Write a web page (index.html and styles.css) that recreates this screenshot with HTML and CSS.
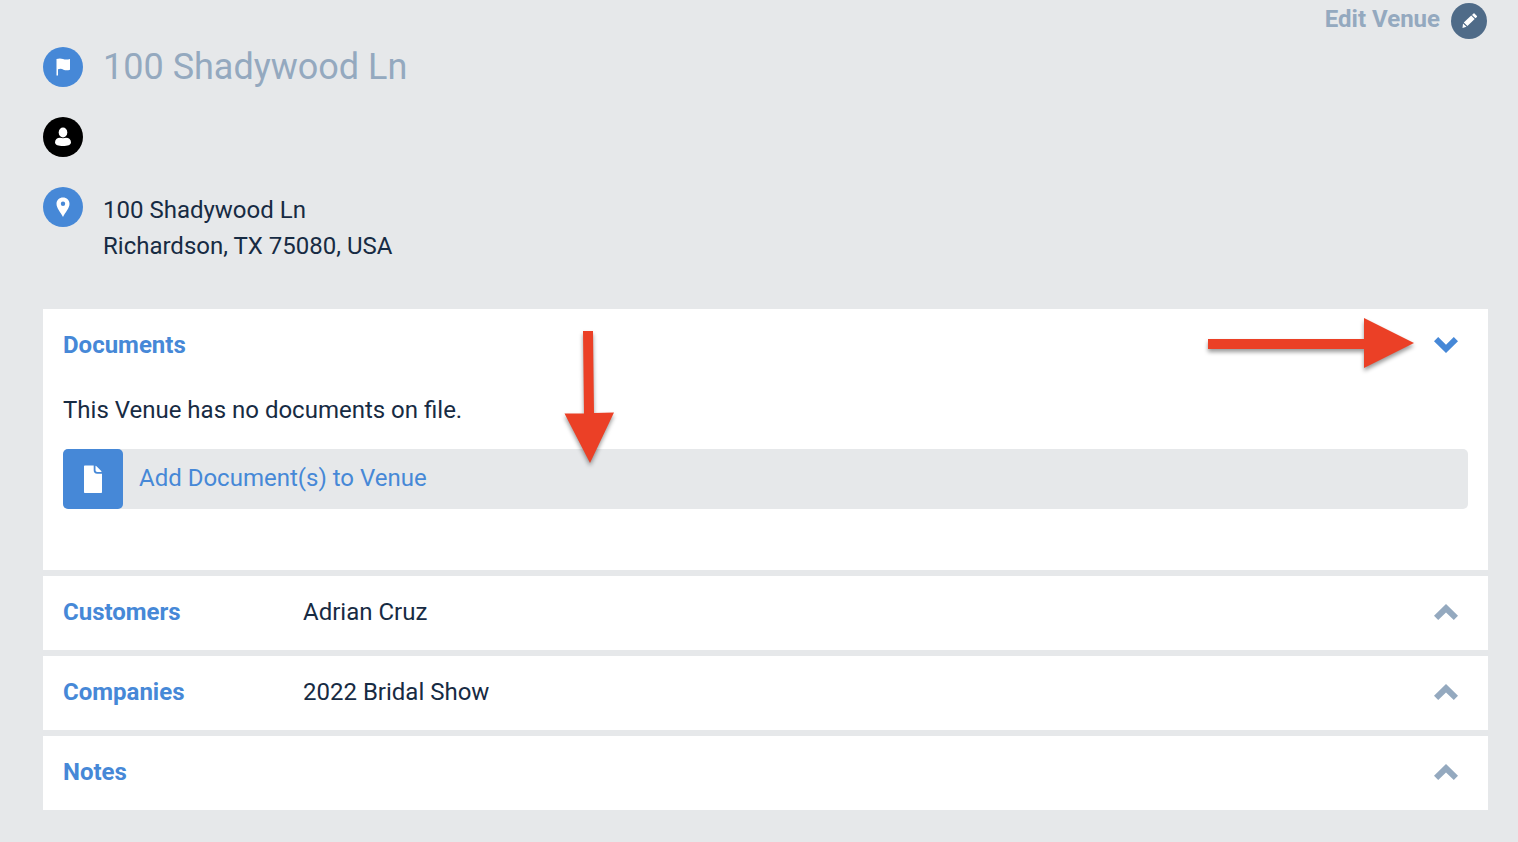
FILE: index.html
```html
<!DOCTYPE html>
<html lang="en">
<head>
<meta charset="utf-8">
<meta name="viewport" content="width=device-width, initial-scale=1">
<title>100 Shadywood Ln</title>
<link rel="stylesheet" href="styles.css">
</head>
<body>
<main class="venue">
  <header class="toolbar">
    <a class="edit" href="#edit">
      <span class="edit-label">Edit Venue</span>
      <span class="edit-icon"><svg width="36" height="36" viewBox="0 0 36 36" aria-hidden="true"><path fill="#fff" d="M12 20.500l3.500 3.200-4 1.300zM12.800 19.500L20.200 12.600l3.500 3.500-7.300 7zM21 11.900l1.500-1.400q.5-.4 1 0l2.400 2.400q.4.500 0 1l-1.400 1.400z"/></svg></span>
    </a>
  </header>

  <section class="details">
    <div class="detail">
      <span class="badge"><svg width="40" height="40" viewBox="0 0 40 40" aria-hidden="true"><path fill="#fff" d="M13.500 12q3.500-1.200 6.500 0 3 1.100 7 0v10.700q-3.500 1.100-6.500 0-2.500-1.500-5.500-.4V28.500h-1.500z"/></svg></span>
      <h1 class="title">100 Shadywood Ln</h1>
    </div>
    <div class="detail">
      <span class="badge badge-dark"><svg width="40" height="40" viewBox="0 0 40 40" aria-hidden="true"><g fill="#fff"><ellipse cx="20" cy="15.500" rx="4.300" ry="4.900"/><path d="M12 25.500c0-3 2-4.600 5-4.700q3 .9 6 0c3 .1 5 1.700 5 4.700 0 2.400-3.500 3.500-8 3.500s-8-1.100-8-3.500z"/></g></svg></span>
    </div>
    <div class="detail">
      <span class="badge"><svg width="40" height="40" viewBox="0 0 40 40" aria-hidden="true"><path fill="#fff" fill-rule="evenodd" d="M20 10.500c3.700 0 6.500 2.700 6.500 6.300 0 4.500-4.200 8.500-6.500 13.200-2.300-4.700-6.500-8.700-6.500-13.200 0-3.600 2.800-6.300 6.500-6.300zm0 4a2.200 2.200 0 1 0 0 4.400 2.200 2.200 0 0 0 0-4.400z"/></svg></span>
      <address class="address">100 Shadywood Ln<br>Richardson, TX 75080, USA</address>
    </div>
  </section>

  <section class="panels">
    <article class="panel panel-open">
      <div class="panel-head">
        <h2 class="panel-title">Documents</h2>
        <button class="toggle toggle-open" type="button" aria-label="Collapse Documents" aria-expanded="true"><svg width="24" height="16" viewBox="0 0 24 16" aria-hidden="true"><path fill="currentColor" d="M0 4.200L4.200 0 12 7.800 19.800 0 24 4.200 12 16z"/></svg></button>
      </div>
      <p class="empty">This Venue has no documents on file.</p>
      <button class="add" type="button">
        <span class="add-icon"><svg width="18" height="28" viewBox="0 0 18 28" aria-hidden="true"><path fill="#fff" d="M.8.500H9.700v4.800q0 3.400 3.400 3.400H18v18.500q0 .8-.8.800H.8q-.8 0-.8-.8V1.300Q0 .5.800.5zM11.500.8q.6.100 1 .5L17 5.800q.4.400.6 1.200h-4.300q-1.800 0-1.800-1.800z"/></svg></span>
        <span class="add-label">Add Document(s) to Venue</span>
      </button>
      <svg class="arrow arrow-right" width="216" height="62" viewBox="0 0 216 62" aria-hidden="true"><path fill="#eb4026" d="M5 25h156V4l50 25-50 25V35H5z"/></svg>
      <svg class="arrow arrow-down" width="60" height="146" viewBox="0 0 60 146" aria-hidden="true"><path fill="#eb4026" d="M23 5h10l1 82 20-.5L30 137 4.500 87.500H24z"/></svg>
    </article>
    <article class="panel">
      <div class="panel-head">
        <h2 class="panel-title">Customers</h2>
        <p class="summary">Adrian Cruz</p>
        <button class="toggle" type="button" aria-label="Expand Customers" aria-expanded="false"><svg width="24" height="16" viewBox="0 0 24 16" aria-hidden="true"><path fill="currentColor" d="M0 11.800L4.200 16 12 8.500 19.800 16 24 11.800 12 0z"/></svg></button>
      </div>
    </article>
    <article class="panel">
      <div class="panel-head">
        <h2 class="panel-title">Companies</h2>
        <p class="summary">2022 Bridal Show</p>
        <button class="toggle" type="button" aria-label="Expand Companies" aria-expanded="false"><svg width="24" height="16" viewBox="0 0 24 16" aria-hidden="true"><path fill="currentColor" d="M0 11.800L4.200 16 12 8.500 19.800 16 24 11.800 12 0z"/></svg></button>
      </div>
    </article>
    <article class="panel">
      <div class="panel-head">
        <h2 class="panel-title">Notes</h2>
        <button class="toggle" type="button" aria-label="Expand Notes" aria-expanded="false"><svg width="24" height="16" viewBox="0 0 24 16" aria-hidden="true"><path fill="currentColor" d="M0 11.800L4.200 16 12 8.500 19.800 16 24 11.800 12 0z"/></svg></button>
      </div>
    </article>
  </section>
</main>
</body>
</html>
```

FILE: styles.css
```css
* {
  box-sizing: border-box;
}

body {
  margin: 0;
  background: #e6e8ea;
  color: #172b43;
  font: 24px/36px Roboto, "Liberation Sans", sans-serif;
}

h1, h2, p {
  margin: 0;
}

svg {
  display: block;
}

button {
  border: 0;
  padding: 0;
  font: inherit;
  cursor: pointer;
}

.venue {
  padding: 3px 30px 32px 43px;
}

.toolbar {
  display: flex;
  justify-content: flex-end;
}

.edit {
  display: flex;
  gap: 11px;
  color: #94a9bf;
  font-weight: 700;
  text-decoration: none;
}

.edit-label {
  line-height: 32px;
}

.edit-icon {
  width: 36px;
  height: 36px;
  margin-right: 1px;
  border-radius: 50%;
  background: #4f6b88;
}

.details {
  display: flex;
  flex-direction: column;
  gap: 30px;
  padding-top: 8px;
}

.detail {
  display: flex;
  align-items: flex-start;
  gap: 20px;
}

.badge {
  flex: none;
  width: 40px;
  height: 40px;
  border-radius: 50%;
  background: #4688d7;
}

.badge-dark {
  background: #000;
}

.title {
  color: #94a9bf;
  font-size: 36px;
  font-weight: 400;
  line-height: 40px;
}

.address {
  padding-top: 5px;
  font-style: normal;
}

.panels {
  display: flex;
  flex-direction: column;
  gap: 6px;
  margin-top: 45px;
}

.panel {
  position: relative;
  padding: 18px 20px 20px;
  background: #fff;
}

.panel-open {
  padding-bottom: 61px;
}

.panel-head {
  display: flex;
  align-items: center;
}

.panel-title {
  width: 240px;
  color: #4688d7;
  font-size: 24px;
  font-weight: 700;
}

.toggle {
  margin-left: auto;
  padding: 10px;
  background: none;
  color: #94a9bf;
}

.toggle-open {
  color: #4688d7;
}

.empty {
  margin-top: 29px;
}

.add {
  display: flex;
  width: 100%;
  margin-top: 21px;
  border-radius: 5px;
  background: #e6e8ea;
  color: #4688d7;
  text-align: left;
}

.add-icon {
  display: grid;
  place-items: center;
  width: 60px;
  height: 60px;
  border-radius: 5px;
  background: #4688d7;
}

.add-label {
  padding: 11px 16px;
}

.arrow {
  position: absolute;
  pointer-events: none;
  filter: drop-shadow(0 3px 2px rgba(0, 0, 0, 0.4));
}

.arrow-right {
  top: 5px;
  right: 69px;
}

.arrow-down {
  top: 17px;
  left: 517px;
}
```
